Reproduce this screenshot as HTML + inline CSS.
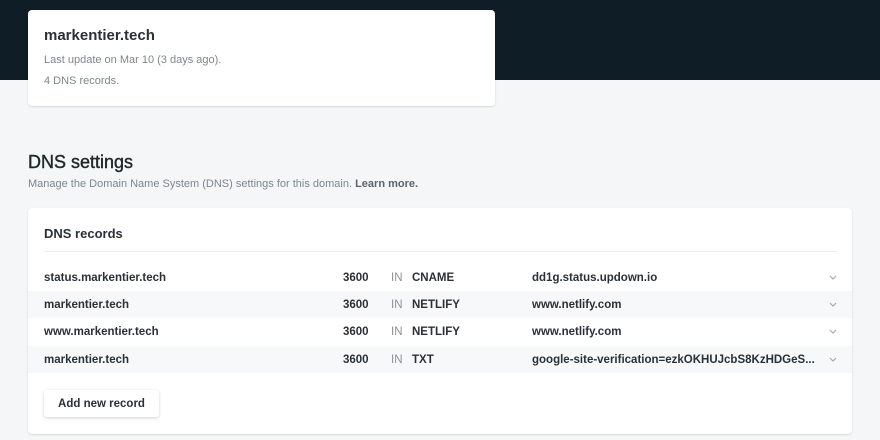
<!DOCTYPE html><html><head><style>
body{margin:0;width:880px;height:440px;overflow:hidden;background:#f4f6f7;font-family:"Liberation Sans",sans-serif;position:relative}
.hdr{position:absolute;left:0;top:0;width:880px;height:80px;background:#0f1e26}
.card{position:absolute;background:#fff;border-radius:4px;box-shadow:0 1px 2px rgba(0,0,0,.12)}
.t{position:absolute;white-space:nowrap}
.row{position:absolute;left:28px;width:824px;height:27px}
.row span{position:absolute;top:8px;font-size:11.5px;font-weight:bold;color:#2a3136}
.row .in{font-weight:normal;color:#8b9398}
.row svg{position:absolute;left:801px;top:11px}
</style></head><body>
<div class="hdr"></div>
<div class="card" style="left:28px;top:10px;width:467px;height:96px"></div>
<div class="t" style="left:44px;top:27px;font-size:15px;font-weight:bold;color:#2a3136">markentier.tech</div>
<div class="t" style="left:44px;top:54px;font-size:11px;color:#7e868b">Last update on Mar 10 (3 days ago).</div>
<div class="t" style="left:44px;top:75px;font-size:11px;color:#7e868b">4 DNS records.</div>
<div class="t" style="left:28px;top:152px;font-size:18px;color:#1f272b;-webkit-text-stroke:0.4px #1f272b">DNS settings</div>
<div class="t" style="left:28px;top:178px;font-size:11px;color:#7e868b">Manage the Domain Name System (DNS) settings for this domain. <b style="color:#5d6569">Learn more.</b></div>
<div class="card" style="left:28px;top:208px;width:824px;height:226px"></div>
<div class="t" style="left:44px;top:226px;font-size:13px;color:#2a3136;font-weight:bold">DNS records</div>
<div style="position:absolute;left:44px;top:251px;width:793px;height:1px;background:#eceff1"></div>
<div class="row" style="top:264px"><span style="left:16px">status.markentier.tech</span><span style="left:315px">3600</span><span class="in" style="left:363px">IN</span><span style="left:384px">CNAME</span><span style="left:504px">dd1g.status.updown.io</span><svg width="8" height="6"><path d="M1 1L4 4L7 1" fill="none" stroke="#a4aaae" stroke-width="1.2"/></svg></div>
<div class="row" style="top:291px;background:#f6f8f9"><span style="left:16px">markentier.tech</span><span style="left:315px">3600</span><span class="in" style="left:363px">IN</span><span style="left:384px">NETLIFY</span><span style="left:504px">www.netlify.com</span><svg width="8" height="6"><path d="M1 1L4 4L7 1" fill="none" stroke="#a4aaae" stroke-width="1.2"/></svg></div>
<div class="row" style="top:318px"><span style="left:16px">www.markentier.tech</span><span style="left:315px">3600</span><span class="in" style="left:363px">IN</span><span style="left:384px">NETLIFY</span><span style="left:504px">www.netlify.com</span><svg width="8" height="6"><path d="M1 1L4 4L7 1" fill="none" stroke="#a4aaae" stroke-width="1.2"/></svg></div>
<div class="row" style="top:346px;background:#f6f8f9"><span style="left:16px">markentier.tech</span><span style="left:315px">3600</span><span class="in" style="left:363px">IN</span><span style="left:384px">TXT</span><span style="left:504px">google-site-verification=ezkOKHUJcbS8KzHDGeS...</span><svg width="8" height="6"><path d="M1 1L4 4L7 1" fill="none" stroke="#a4aaae" stroke-width="1.2"/></svg></div>
<div style="position:absolute;left:44px;top:390px;width:115px;height:27px;background:#fff;border-radius:3px;box-shadow:0 1px 3px rgba(0,0,0,.18);font-size:11.5px;font-weight:bold;color:#2a3136;text-align:center;line-height:28px">Add new record</div>
</body></html>
